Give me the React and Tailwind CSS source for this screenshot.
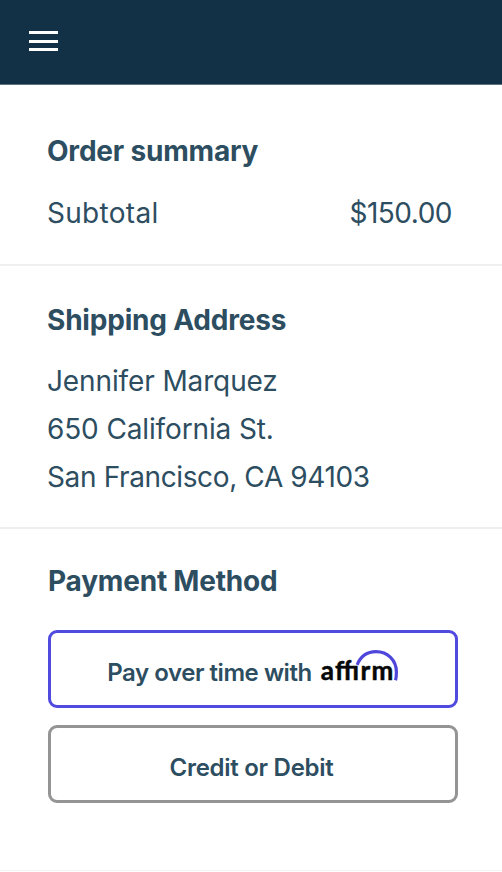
function Heading({ children, className = '' }) {
  return <h2 className={`text-[28px] leading-[36px] font-bold tracking-[-0.2px] whitespace-nowrap ${className}`}>{children}</h2>;
}

function AffirmLogo() {
  return (
    <svg className="-mt-[12px] shrink-0 overflow-visible" width="78" height="34" viewBox="0 0 78 34" role="img" aria-label="affirm">
      <path d="M36.2 14.8C39.6 6.4 46.6 1.7 55 1.7C66.6 1.7 75.4 10.2 75.4 22.2C75.4 25.6 75.1 28.2 74.5 30.2" fill="none" stroke="#4f46dc" strokeWidth="3.2" />
      <text x="-0.2" y="30.2" textLength="72.5" fontFamily="Lato, sans-serif" fontWeight="700" fontSize="26" fill="#060809" stroke="#060809" strokeWidth="0.5">aff&#x131;rm</text>
    </svg>
  );
}

export default function App() {
  return (
    <div className="flex h-[872px] w-[502px] flex-col overflow-hidden bg-white font-['Inter','Liberation_Sans',sans-serif] text-[#2d4d61]">
      <header className="flex h-[85px] shrink-0 items-start border-b border-[#5f717e] bg-[#123146] pt-[31px] pl-[29px]">
        <button aria-label="Menu" className="flex w-[29px] flex-col gap-[5.5px]">
          <span className="h-[3px] w-full bg-white" />
          <span className="h-[3px] w-full bg-white" />
          <span className="h-[3px] w-full bg-white" />
        </button>
      </header>
      <section className="h-[181px] shrink-0 border-b-2 border-[#efefef] pt-[48px] pr-[50px] pl-[47px]">
        <Heading>Order summary</Heading>
        <div className="mt-[20px] flex justify-between text-[28px] leading-[48px]">
          <span className="tracking-[0.3px]">Subtotal</span>
          <span className="tracking-[-0.5px]">$150.00</span>
        </div>
      </section>
      <section className="h-[263px] shrink-0 border-b-2 border-[#efefef] pt-[36px] pl-[47px]">
        <Heading>Shipping Address</Heading>
        <address className="mt-[19px] flex flex-col items-start text-[28px] leading-[48px] whitespace-nowrap not-italic">
          <span className="tracking-[-0.12px]">Jennifer Marquez</span>
          <span className="tracking-[-0.13px]">650 California St.</span>
          <span className="tracking-[-0.37px]">San Francisco, CA 94103</span>
        </address>
      </section>
      <section className="h-[342px] shrink-0 border-b border-[#f3f3f3] pt-[34px] pr-[44px] pl-[48px]">
        <Heading>Payment Method</Heading>
        <div className="mt-[31px] flex flex-col gap-[17px]">
          <button className="flex h-[78px] items-center justify-center gap-[9px] rounded-[9px] border-3 border-[#514adf] pt-[7px] text-[24px] leading-[32px] font-semibold whitespace-nowrap">
            <span className="tracking-[-0.45px]">Pay over time with</span>
            <AffirmLogo />
          </button>
          <button className="flex h-[78px] items-center justify-center rounded-[9px] border-3 border-[#949494] pt-[7px] pr-[3px] text-[24px] leading-[32px] font-semibold whitespace-nowrap">
            <span className="tracking-[-0.28px]">Credit or Debit</span>
          </button>
        </div>
      </section>
    </div>
  );
}
